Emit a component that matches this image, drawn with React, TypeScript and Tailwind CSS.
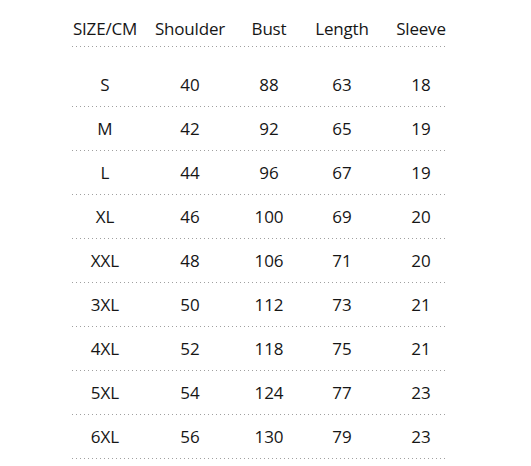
import React from "react";

const rows: string[][] = [
  ["S", "40", "88", "63", "18"],
  ["M", "42", "92", "65", "19"],
  ["L", "44", "96", "67", "19"],
  ["XL", "46", "100", "69", "20"],
  ["XXL", "48", "106", "71", "20"],
  ["3XL", "50", "112", "73", "21"],
  ["4XL", "52", "118", "75", "21"],
  ["5XL", "54", "124", "77", "23"],
  ["6XL", "56", "130", "79", "23"],
];

const headers = ["SIZE/CM", "Shoulder", "Bust", "Length", "Sleeve"];

function Dots() {
  return <div className="h-px w-[375px] bg-[repeating-linear-gradient(to_right,#a0a0a0_0px,#a0a0a0_1px,transparent_1px,transparent_4px)]" />;
}

function Row({ cells, className }: { cells: string[]; className: string }) {
  return (
    <div className={`grid w-[382px] grid-cols-[66px_104px_54px_92px_66px] items-center justify-items-center ${className}`}>
      {cells.map((c, i) => (
        <div key={i} className="whitespace-nowrap">{c}</div>
      ))}
    </div>
  );
}

export default function App() {
  return (
    <div className="w-[531px] h-[466px] bg-white text-[#161616] text-[17px] font-medium overflow-hidden" style={{ fontFamily: '"Open Sans", sans-serif' }}>
      <div className="ml-[72px] pt-[16px]">
        <Row cells={headers} className="h-[22px] tracking-[-0.2px]" />
        <div className="mt-[8px]">
          <Dots />
        </div>
        <div className="mt-[16px]">
          {rows.map((r) => (
            <div key={r[0]}>
              <Row cells={r} className="h-[43px]" />
              <Dots />
            </div>
          ))}
        </div>
      </div>
    </div>
  );
}
